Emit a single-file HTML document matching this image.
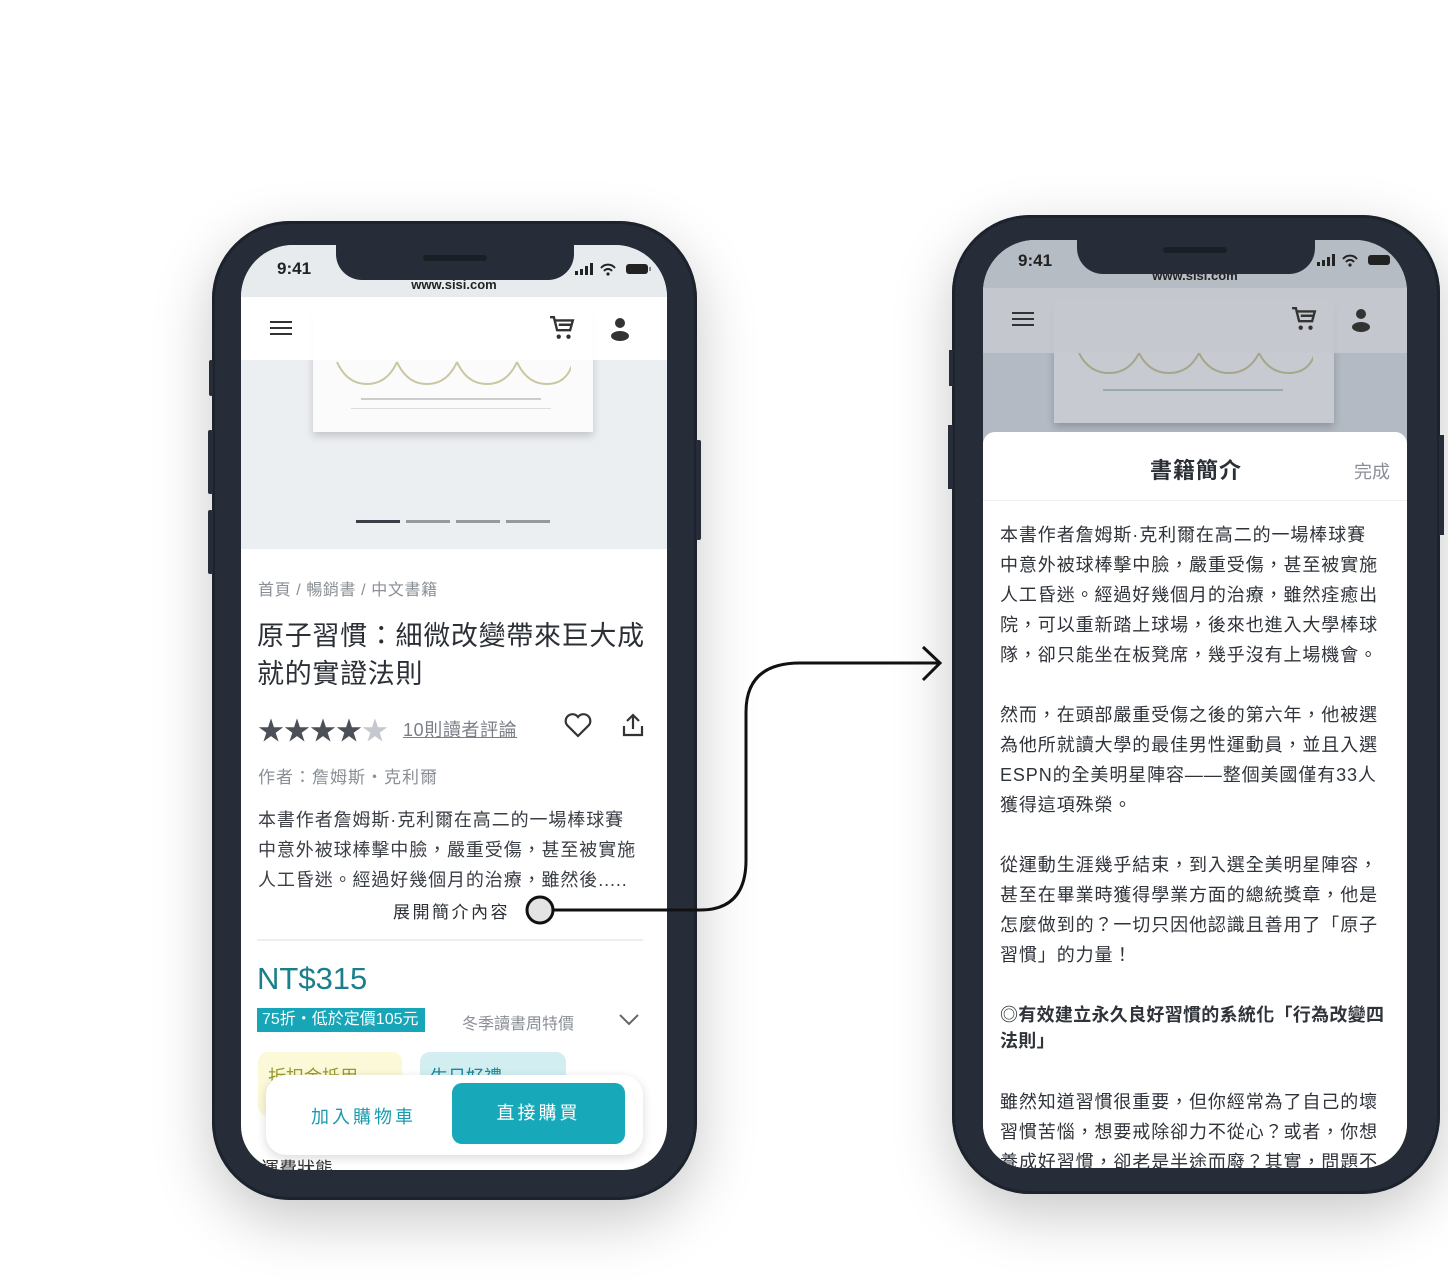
<!DOCTYPE html>
<html><head><meta charset="utf-8"><style>
*{margin:0;padding:0;box-sizing:border-box}
body{width:1448px;height:1280px;background:#fff;position:relative;overflow:hidden;font-family:"Liberation Sans","Noto Sans CJK TC",sans-serif;color:#333}
.abs{position:absolute}
.frame{position:absolute;background:#262d38;border-radius:78px;box-shadow:0 20px 60px rgba(0,0,0,.22),inset 0 0 0 3px #1d232c}
.screen{position:absolute;overflow:hidden;border-radius:52px;background:#fff}
.notch{position:absolute;background:#262d38;border-radius:0 0 26px 26px}
.t{position:absolute;white-space:nowrap}
</style></head><body>

<!-- LEFT PHONE -->
<div class="frame" style="left:212px;top:221px;width:485px;height:979px"></div>
<div class="abs" style="left:209px;top:360px;width:4px;height:36px;background:#262d38;border-radius:2px"></div>
<div class="abs" style="left:208px;top:430px;width:5px;height:64px;background:#262d38;border-radius:2px"></div>
<div class="abs" style="left:208px;top:510px;width:5px;height:64px;background:#262d38;border-radius:2px"></div>
<div class="abs" style="left:696px;top:440px;width:5px;height:100px;background:#262d38;border-radius:2px"></div>
<div class="screen" style="left:241px;top:245px;width:426px;height:925px;border-radius:52px 52px 44px 44px">
  <div class="abs" style="left:0;top:0;width:426px;height:52px;background:#e8ebee"></div>
  <div class="t" style="left:36px;top:14px;font-size:17px;font-weight:bold;color:#222">9:41</div>
  <svg class="abs" style="left:334px;top:18px" width="80" height="14"><rect x="0" y="8" width="3" height="4" fill="#222"/><rect x="5" y="6" width="3" height="6" fill="#222"/><rect x="10" y="3" width="3" height="9" fill="#222"/><rect x="15" y="0" width="3" height="12" fill="#222"/><path d="M26 5a9 9 0 0 1 14 0M29 8a5 5 0 0 1 8 0" stroke="#222" stroke-width="2" fill="none"/><circle cx="33" cy="11" r="1.6" fill="#222"/><rect x="51" y="1" width="22" height="10" rx="3" fill="#222"/><rect x="74" y="4" width="2" height="4" fill="#888"/></svg>
  <div class="t" style="left:0;width:426px;text-align:center;top:32px;font-size:13px;font-weight:bold;color:#222">www.sisi.com</div>
  <div class="notch" style="left:95px;top:0;width:238px;height:35px"></div>
  <div class="abs" style="left:182px;top:10px;width:64px;height:6px;border-radius:3px;background:#1a1f26"></div>
  <div class="abs" style="left:0;top:52px;width:426px;height:63px;background:#fff"></div>
  <div class="abs" style="left:0;top:115px;width:426px;height:189px;background:#eceff2"></div>
  <div class="abs" style="left:72px;top:60px;width:280px;height:127px;background:#fbfbfc;box-shadow:0 4px 8px rgba(0,0,0,.18)"></div>
  <div class="abs" style="left:0;top:52px;width:426px;height:63px;background:rgba(255,255,255,.9)"></div>
  <svg class="abs" style="left:90px;top:115px" width="240" height="60"><g fill="none" stroke="#c9c7a0" stroke-width="2"><path d="M6 2q10 22 30 22q20 0 30-22"/><path d="M66 2q10 22 30 22q20 0 30-22"/><path d="M126 2q10 22 30 22q20 0 30-22"/><path d="M186 2q10 22 30 22q20 0 26-22"/></g><rect x="30" y="38" width="180" height="2" fill="#ccc"/><rect x="20" y="48" width="200" height="1" fill="#ddd"/></svg>
  <div class="abs" style="left:115px;top:275px;width:44px;height:3px;background:#3b4048"></div>
  <div class="abs" style="left:165px;top:275px;width:44px;height:3px;background:#999"></div>
  <div class="abs" style="left:215px;top:275px;width:44px;height:3px;background:#999"></div>
  <div class="abs" style="left:265px;top:275px;width:44px;height:3px;background:#999"></div>
  <svg class="abs" style="left:29px;top:75px" width="22" height="16"><path d="M0 2h22M0 8h22M0 14h22" stroke="#333" stroke-width="2"/></svg>
  <svg class="abs" style="left:308px;top:70px" width="26" height="26" viewBox="0 0 24 24"><path d="M1 2h3.5l3 12h12l2.5-9H6M9 9h11" stroke="#333" stroke-width="2.2" fill="none"/><circle cx="9" cy="20" r="2" fill="#333"/><circle cx="18" cy="20" r="2" fill="#333"/></svg>
  <svg class="abs" style="left:369px;top:72px" width="20" height="24"><circle cx="10" cy="6" r="5" fill="#333"/><ellipse cx="10" cy="19" rx="9" ry="5" fill="#333"/></svg>

  <div class="t" style="left:17px;top:331px;font-size:16px;letter-spacing:0.6px;color:#8a8f96">首頁 / 暢銷書 / 中文書籍</div>
  <div class="t" style="left:16px;top:372px;font-size:27px;line-height:38px;letter-spacing:0.7px;color:#2b2f36">原子習慣：細微改變帶來巨大成<br>就的實證法則</div>
  <div class="t" style="left:17px;top:466px;font-size:26px;letter-spacing:0px;color:#4b4f57">★★★★<span style="color:#c5c8cc">★</span></div>
  <div class="t" style="left:162px;top:471px;font-size:18px;letter-spacing:0.6px;color:#7a7f87;text-decoration:underline">10則讀者評論</div>
  <svg class="abs" style="left:323px;top:467px" width="28" height="26" viewBox="0 0 28 26"><path d="M14 24L3 13a6.5 6.5 0 0 1 11-8 6.5 6.5 0 0 1 11 8z" fill="none" stroke="#333" stroke-width="2.2"/></svg>
  <svg class="abs" style="left:381px;top:468px" width="22" height="24"><path d="M11 16V3M5 8l6-6 6 6M2 13v9h18v-9" fill="none" stroke="#333" stroke-width="2.2"/></svg>
  <div class="t" style="left:17px;top:518px;font-size:17px;letter-spacing:1px;color:#8a8f96">作者：詹姆斯・克利爾</div>
  <div class="t" style="left:17px;top:560px;font-size:18px;line-height:30px;letter-spacing:0.9px;color:#3a3e45">本書作者詹姆斯·克利爾在高二的一場棒球賽<br>中意外被球棒擊中臉，嚴重受傷，甚至被實施<br>人工昏迷。經過好幾個月的治療，雖然後.....</div>
  <div class="t" style="left:152px;top:653px;font-size:17px;letter-spacing:2.5px;color:#2b2f36">展開簡介內容</div>
  <div class="abs" style="left:16px;top:694px;width:386px;height:2px;background:#eee"></div>
  <div class="t" style="left:16px;top:716px;font-size:31px;color:#1a7f8c">NT$315</div>
  <div class="abs" style="left:16px;top:763px;width:168px;height:24px;background:#17a5b8;color:#fff;font-size:16px;line-height:24px;padding-left:5px">75折・低於定價105元</div>
  <div class="t" style="left:221px;top:765px;font-size:16px;color:#8a8f96">冬季讀書周特價</div>
  <svg class="abs" style="left:378px;top:769px" width="20" height="12"><path d="M1 1l9 9 9-9" stroke="#666" stroke-width="2" fill="none"/></svg>
  <div class="abs" style="left:17px;top:807px;width:144px;height:64px;background:#fbf9d8;border-radius:10px"></div>
  <div class="t" style="left:27px;top:818px;font-size:18px;color:#9a9a30">折扣金抵用</div>
  <div class="abs" style="left:179px;top:807px;width:146px;height:64px;background:#d2eef1;border-radius:10px"></div>
  <div class="t" style="left:189px;top:818px;font-size:18px;color:#1a8a9a">生日好禮</div>
  <div class="t" style="left:20px;top:910px;font-size:18px;color:#333">運費狀態</div>
  <div class="abs" style="left:25px;top:830px;width:377px;height:80px;background:#fff;border-radius:20px;box-shadow:0 3px 10px rgba(0,0,0,.15)"></div>
  <div class="t" style="left:70px;top:858px;font-size:18px;letter-spacing:3px;color:#1a9cb0">加入購物車</div>
  <div class="abs" style="left:211px;top:838px;width:173px;height:61px;background:#17a9b9;border-radius:10px;color:#fff;font-size:18px;letter-spacing:3px;text-align:center;line-height:61px">直接購買</div>
</div>

<!-- RIGHT PHONE -->
<div class="frame" style="left:952px;top:215px;width:488px;height:979px"></div>
<div class="abs" style="left:949px;top:350px;width:4px;height:36px;background:#262d38"></div>
<div class="abs" style="left:948px;top:425px;width:5px;height:64px;background:#262d38"></div>
<div class="abs" style="left:1439px;top:435px;width:5px;height:100px;background:#262d38"></div>
<div class="screen" style="left:983px;top:240px;width:424px;height:928px;border-radius:52px 52px 44px 44px">
  <div class="abs" style="left:0;top:0;width:424px;height:48px;background:#b6bcc4"></div>
  <div class="t" style="left:35px;top:11px;font-size:17px;font-weight:bold;color:#222">9:41</div>
  <svg class="abs" style="left:334px;top:14px" width="80" height="14"><rect x="0" y="8" width="3" height="4" fill="#222"/><rect x="5" y="6" width="3" height="6" fill="#222"/><rect x="10" y="3" width="3" height="9" fill="#222"/><rect x="15" y="0" width="3" height="12" fill="#222"/><path d="M26 5a9 9 0 0 1 14 0M29 8a5 5 0 0 1 8 0" stroke="#222" stroke-width="2" fill="none"/><circle cx="33" cy="11" r="1.6" fill="#222"/><rect x="51" y="1" width="22" height="10" rx="3" fill="#222"/></svg>
  <div class="t" style="left:0;width:424px;text-align:center;top:28px;font-size:13px;font-weight:bold;color:#222">www.sisi.com</div>
  <div class="notch" style="left:94px;top:0;width:238px;height:34px"></div>
  <div class="abs" style="left:180px;top:7px;width:64px;height:6px;border-radius:3px;background:#1a1f26"></div>
  <div class="abs" style="left:0;top:48px;width:424px;height:65px;background:#c3c7cd"></div>
  <div class="abs" style="left:0;top:113px;width:424px;height:100px;background:#b3bac3"></div>
  <div class="abs" style="left:71px;top:60px;width:280px;height:123px;background:#c7cbd1;box-shadow:0 4px 8px rgba(0,0,0,.2)"></div>
  <div class="abs" style="left:0;top:48px;width:424px;height:65px;background:rgba(196,200,206,.85)"></div>
  <svg class="abs" style="left:90px;top:113px" width="240" height="60"><g fill="none" stroke="#a5a68a" stroke-width="2"><path d="M6 0q10 20 30 20q20 0 30-20"/><path d="M66 0q10 20 30 20q20 0 30-20"/><path d="M126 0q10 20 30 20q20 0 30-20"/><path d="M186 0q10 20 30 20q20 0 26-20"/></g><rect x="30" y="36" width="180" height="2" fill="#9aa"/></svg>
  <svg class="abs" style="left:29px;top:71px" width="22" height="16"><path d="M0 2h22M0 8h22M0 14h22" stroke="#333" stroke-width="2"/></svg>
  <svg class="abs" style="left:308px;top:66px" width="26" height="26" viewBox="0 0 24 24"><path d="M1 2h3.5l3 12h12l2.5-9H6M9 9h11" stroke="#333" stroke-width="2.2" fill="none"/><circle cx="9" cy="20" r="2" fill="#333"/><circle cx="18" cy="20" r="2" fill="#333"/></svg>
  <svg class="abs" style="left:368px;top:68px" width="20" height="24"><circle cx="10" cy="6" r="5" fill="#333"/><ellipse cx="10" cy="19" rx="9" ry="5" fill="#333"/></svg>
  <div class="abs" style="left:0;top:192px;width:424px;height:740px;background:#fff;border-radius:12px 12px 0 0"></div>
  <div class="t" style="left:0;width:426px;text-align:center;top:213px;font-size:22px;font-weight:bold;letter-spacing:1px;color:#2b2f36">書籍簡介</div>
  <div class="t" style="left:371px;top:218px;font-size:18px;color:#8a8f96">完成</div>
  <div class="abs" style="left:0;top:260px;width:424px;height:1px;background:#eef0f2"></div>
  <div class="t" style="left:17px;top:280px;font-size:18px;line-height:30px;letter-spacing:0.9px;color:#2f333a">本書作者詹姆斯·克利爾在高二的一場棒球賽<br>中意外被球棒擊中臉，嚴重受傷，甚至被實施<br>人工昏迷。經過好幾個月的治療，雖然痊癒出<br>院，可以重新踏上球場，後來也進入大學棒球<br>隊，卻只能坐在板凳席，幾乎沒有上場機會。<br><br>然而，在頭部嚴重受傷之後的第六年，他被選<br>為他所就讀大學的最佳男性運動員，並且入選<br>ESPN的全美明星陣容——整個美國僅有33人<br>獲得這項殊榮。<br><br>從運動生涯幾乎結束，到入選全美明星陣容，<br>甚至在畢業時獲得學業方面的總統獎章，他是<br>怎麼做到的？一切只因他認識且善用了「原子<br>習慣」的力量！</div>
  <div class="t" style="left:17px;top:762px;font-size:18px;line-height:26px;font-weight:bold;letter-spacing:0.3px;color:#2f333a">◎有效建立永久良好習慣的系統化「行為改變四<br>法則」</div>
  <div class="t" style="left:17px;top:847px;font-size:18px;line-height:30px;letter-spacing:0.9px;color:#2f333a">雖然知道習慣很重要，但你經常為了自己的壞<br>習慣苦惱，想要戒除卻力不從心？或者，你想<br>養成好習慣，卻老是半途而廢？其實，問題不</div>
</div>

<!-- ARROW -->
<svg class="abs" style="left:0;top:0" width="1448" height="1280">
  <path d="M553 910H700Q746 910 746 860V712Q746 663 800 663H940" fill="none" stroke="#111" stroke-width="3"/>
  <path d="M923 647L940 663L923 680" fill="none" stroke="#111" stroke-width="3"/>
  <circle cx="540" cy="910" r="13" fill="#e3e3e3" stroke="#111" stroke-width="3"/>
</svg>
</body></html>
